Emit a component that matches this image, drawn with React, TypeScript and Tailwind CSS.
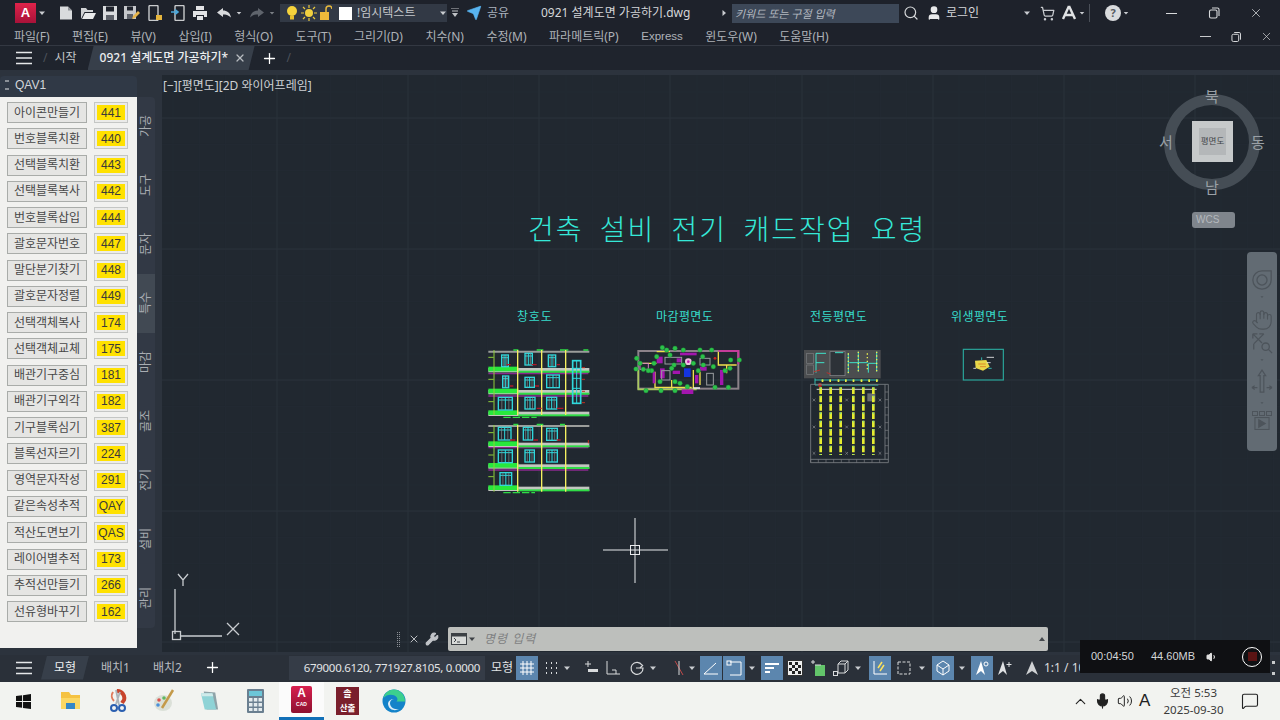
import { Hand, Mic, MessageSquare, Search, ShoppingCart, Volume1, Volume2, Wrench, X, Plus, ChevronUp, Send, User } from "lucide-react"
import { ReactNode } from "react"

const tools: [string, string][] = [
    ["아이콘만들기", "441"],
    ["번호블록치환", "440"],
    ["선택블록치환", "443"],
    ["선택블록복사", "442"],
    ["번호블록삽입", "444"],
    ["괄호문자번호", "447"],
    ["말단분기찾기", "448"],
    ["괄호문자정렬", "449"],
    ["선택객체복사", "174"],
    ["선택객체교체", "175"],
    ["배관기구중심", "181"],
    ["배관기구외각", "182"],
    ["기구블록심기", "387"],
    ["블록선자르기", "224"],
    ["영역문자작성", "291"],
    ["같은속성추적", "QAY"],
    ["적산도면보기", "QAS"],
    ["레이어별추적", "173"],
    ["추적선만들기", "266"],
    ["선유형바꾸기", "162"],
]

const sideTabs = ["가공", "도구", "문자", "특수", "마감", "골조", "전기", "설비", "관리"]

const menus = ["파일(F)", "편집(E)", "뷰(V)", "삽입(I)", "형식(O)", "도구(T)", "그리기(D)", "치수(N)", "수정(M)", "파라메트릭(P)", "Express", "윈도우(W)", "도움말(H)"]

function Caret({ className = "", color = "#c9ccd0" }: { className?: string; color?: string }) {
    return (
        <svg viewBox="0 0 8 8" className={`w-2 h-2 shrink-0 ${className}`}>
            <polygon points="1,2.5 7,2.5 4,6" fill={color} />
        </svg>
    )
}

function Burger({ className = "" }: { className?: string }) {
    return (
        <svg viewBox="0 0 16 14" className={`w-4 h-[14px] shrink-0 ${className}`}>
            <path d="M0 1.5h16M0 7h16M0 12.5h16" stroke="#e6e8ea" strokeWidth="1.6" />
        </svg>
    )
}

function Restore({ className = "" }: { className?: string }) {
    return (
        <svg viewBox="0 0 12 12" className={`w-3 h-3 shrink-0 ${className}`} fill="none" stroke="#d8dadc" strokeWidth="1.1">
            <rect x="1.5" y="3" width="7.5" height="8" rx="1.5" />
            <path d="M4 1h5.5A1.5 1.5 0 0 1 11 2.5V9" />
        </svg>
    )
}

function Ico({ children, className = "" }: { children: ReactNode; className?: string }) {
    return (
        <svg viewBox="0 0 16 16" className={`w-4 h-4 shrink-0 ${className}`} fill="none">
            {children}
        </svg>
    )
}

function TitleBar() {
    return (
        <div className="flex items-center h-[26px] bg-[#1e222b] text-[#d4d6d9] text-[12px]">
            <div className="ml-[15px] w-[21px] h-[20px] bg-gradient-to-b from-[#e0234a] to-[#a81239] flex items-center justify-center text-white text-[13px] font-bold [font-family:'Liberation_Sans',sans-serif] shrink-0">A</div>
            <Caret className="ml-[2px]" />
            <Ico className="ml-[12px]"><path d="M2 1.5h8l4 4v9H2z" fill="#d9dbdd" /><path d="M10 1.5v4h4" fill="#8f9398" /></Ico>
            <Ico className="ml-[6px]"><path d="M1 3h5l1.5 2H13v2H4.5L1 14z" fill="#d0d2d4" /><path d="M5 8h11l-3 6H2z" fill="#e9eaeb" /></Ico>
            <Ico className="ml-[6px]"><path d="M1 1h14v14H1z" fill="#d9dbdd" /><path d="M4 1.5h8v5H4z" fill="#1e222b" /><path d="M4 10h8v5H4z" fill="#5c6068" /></Ico>
            <Ico className="ml-[6px]"><path d="M0 1h12v13H0z" fill="#c5c7ca" /><path d="M3 1.5h6v4H3z" fill="#1e222b" /><path d="M3 9h6v5H3z" fill="#5c6068" /><path d="M8 14l1-3 5-5 2 2-5 5z" fill="#e9b64a" /></Ico>
            <Ico className="ml-[7px]"><rect x="2" y="0.5" width="9" height="15" rx="1" stroke="#c8cacc" strokeWidth="1.4" /><path d="M9 10h6v5H9z" fill="#e5b53d" /></Ico>
            <Ico className="ml-[7px]"><rect x="5" y="0.5" width="9" height="15" rx="1" stroke="#c8cacc" strokeWidth="1.4" /><path d="M1 7h6M5 4.5L8 7l-3 2.5" stroke="#4aa8dc" strokeWidth="1.6" /></Ico>
            <Ico className="ml-[6px]"><path d="M4 1h8v4H4z" fill="#e2e3e5" /><path d="M1 6h14v6h-3v-2H4v2H1z" fill="#e2e3e5" /><path d="M5 11h6v4H5z" fill="#e2e3e5" /></Ico>
            <Ico className="ml-[8px]"><path d="M7 3L1 7.5 7 12V9.5c3 0 5 .5 8 3-1-5-4-7-8-7z" fill="#d8dadc" /></Ico>
            <Caret className="ml-[3px] scale-75" />
            <Ico className="ml-[6px]"><path d="M9 3l6 4.5L9 12V9.5c-3 0-5 .5-8 3 1-5 4-7 8-7z" fill="#5f646c" /></Ico>
            <Caret className="ml-[3px] scale-75" color="#7b7f85" />
            <div className="ml-[4px] flex items-center w-[167px] h-[18px] bg-[#323945]">
                <svg viewBox="0 0 12 16" className="ml-[6px] w-3 h-4 shrink-0"><circle cx="6" cy="6" r="5" fill="#f6d33c" /><rect x="4" y="10.5" width="4" height="4" fill="#e8c02c" /></svg>
                <svg viewBox="0 0 16 16" className="ml-[3px] w-4 h-4 shrink-0"><circle cx="8" cy="8" r="4" fill="#f2d13f" /><path d="M8 0v3M8 13v3M0 8h3M13 8h3M2 2l2 2M12 12l2 2M14 2l-2 2M2 14l2-2" stroke="#e9c83c" strokeWidth="1.2" /></svg>
                <svg viewBox="0 0 12 16" className="ml-[3px] w-3 h-4 shrink-0"><path d="M6 8V4a3 3 0 0 1 6 0" stroke="#e7b93e" strokeWidth="1.5" fill="none" /><rect y="7" width="9" height="8" fill="#eeb93a" /></svg>
                <div className="ml-[7px] w-[13px] h-[13px] bg-white shrink-0" />
                <span className="ml-[5px] w-[85px] text-[12px] text-[#c5c8cc]">!임시텍스트</span>
                <Caret />
            </div>
            <svg viewBox="0 0 8 10" className="ml-[4px] w-2 h-[10px] shrink-0"><path d="M0 0h8M1 3h6" stroke="#bfc2c6" /><polygon points="1,5 7,5 4,9" fill="#bfc2c6" /></svg>
            <Send className="ml-[7px] w-4 h-4 shrink-0 text-[#58b4f0]" fill="#58b4f0" strokeWidth={1} />
            <span className="ml-[5px] w-[38px] text-[12px] text-[#aab3be]">공유</span>
            <span className="ml-[16px] w-[167px] text-[12px] whitespace-nowrap">0921 설계도면 가공하기.dwg</span>
            <Caret className="ml-[12px] -rotate-90" />
            <div className="ml-[4px] w-[167px] h-[19px] bg-[#3d4858] pl-[3px] text-[11px] italic text-[#b4b9c0] leading-[19px]">키워드 또는 구절 입력</div>
            <Search className="ml-[4px] w-4 h-4 shrink-0 text-[#d6d8da]" strokeWidth={1.8} />
            <User className="ml-[7px] w-4 h-4 shrink-0 text-[#e8e9ea]" fill="#e8e9ea" />
            <span className="ml-[4px] w-[77px] text-[12px]">로그인</span>
            <Caret />
            <ShoppingCart className="ml-[9px] w-[15px] h-[15px] shrink-0 text-[#c9ccd0]" />
            <svg viewBox="0 0 16 16" className="ml-[6px] w-4 h-4 shrink-0"><path d="M8 1L2 14M8 1l6 13M4 10h8" stroke="#e0e2e4" strokeWidth="2.4" fill="none" /></svg>
            <Caret className="ml-[1px] scale-75" />
            <div className="ml-[3px] w-px h-[18px] bg-[#4a4f58]" />
            <div className="ml-[15px] w-4 h-4 rounded-full bg-[#d9dbdd] text-[#555a60] text-[11px] font-bold flex items-center justify-center shrink-0">?</div>
            <Caret className="ml-[1px] scale-75" />
            <div className="ml-[36px] w-[11px] h-px bg-[#d8dadc]" />
            <Restore className="ml-[31px]" />
            <X className="ml-[29px] w-[14px] h-[14px] text-[#d8dadc]" strokeWidth={1.3} />
        </div>
    )
}

function MenuBar() {
    return (
        <div className="flex items-center h-[20px] bg-[#1e222b] border-b border-[#333842] pl-[14px] pt-[2px] text-[12px] text-[#aeb2b8]">
            <div className="flex gap-[22.5px] flex-1 whitespace-nowrap">
                {menus.map((m) => (
                    <span key={m} className={m === "Express" ? "[font-family:'Liberation_Sans',sans-serif] text-[11.5px]" : ""}>{m}</span>
                ))}
            </div>
            <div className="w-[11px] h-px bg-[#c8cacc]" />
            <Restore className="ml-[19px] scale-90" />
            <X className="ml-[18px] mr-[7px] w-[13px] h-[13px] text-[#d0d2d4]" strokeWidth={1.3} />
        </div>
    )
}

function TabBar() {
    return (
        <div className="flex items-center h-[24px] bg-[#1f242d] text-[12px] text-[#c3c6ca]">
            <Burger className="ml-[16px]" />
            <span className="ml-[11px] text-[#4c525b]">/</span>
            <span className="ml-[7px]">시작</span>
            <div className="ml-[11px] w-[167px] h-[24px] bg-[#373f4a] [clip-path:polygon(6px_0,100%_0,calc(100%-6px)_100%,0_100%)] flex items-center pl-[12px] text-[#eceef0] font-medium whitespace-nowrap">
                0921 설계도면 가공하기*
                <X className="ml-[6px] w-3 h-3 text-[#b8bcc1]" strokeWidth={2.5} />
            </div>
            <Plus className="ml-[6px] w-[17px] h-[17px] text-white" strokeWidth={1.8} />
            <span className="ml-[9px] text-[#4c525b]">/</span>
        </div>
    )
}

function ToolPalette() {
    return (
        <div className="w-[162px] shrink-0 flex flex-col pt-px">
            <div className="w-[137px] h-[21px] bg-[#303946] rounded-t flex items-center pb-[4px] text-[12px] text-[#d3d6da] shrink-0">
                <span className="ml-[5px] w-[4px] h-[10px] border-y-2 border-dotted border-[#8a8f96]" />
                <span className="ml-[6px] [font-family:'Liberation_Sans',sans-serif]">QAV1</span>
            </div>
            <div className="flex flex-1 items-start">
                <div className="w-[137px] h-[551px] bg-[#f1f1ef] pl-[7px] pt-[5px] flex flex-col gap-[5.27px] shrink-0">
                    {tools.map(([name, code]) => (
                        <div key={name} className="flex items-center h-[21px]">
                            <div className="w-[80px] h-[21px] bg-[#e5e5e3] border border-[#a9aca9] flex items-center justify-center text-[12px] text-[#474747] whitespace-nowrap">{name}</div>
                            <div className="ml-[7px] w-[34px] h-[21px] bg-[#ebebe9] border border-[#c4c6c4] p-[2px]">
                                <div className="h-full bg-[#ffe100] flex items-center justify-center text-[12px] text-[#3a3a3a] [font-family:'Liberation_Sans',sans-serif]">{code}</div>
                            </div>
                        </div>
                    ))}
                </div>
                <div className="w-[18px] h-[531px] bg-[#323945] rounded-r">
                    {sideTabs.map((t) => (
                        <div key={t} className={`h-[59px] flex items-center justify-center ${t === "특수" ? "bg-[#414953]" : ""}`}>
                            <span className="[writing-mode:vertical-rl] [text-orientation:sideways] rotate-180 text-[12px] leading-[16px] text-[#a9adb2]">{t}</span>
                        </div>
                    ))}
                </div>
            </div>
        </div>
    )
}

const majorX = [115, 246, 377, 508, 640, 771, 902, 1033]
const majorY = [43, 174, 305, 436, 567]

function GridLines() {
    const minorX = Array.from({ length: 44 }, (_, i) => 11 + i * 26.2)
    const minorY = Array.from({ length: 23 }, (_, i) => 17 + i * 26.2)
    return (
        <svg className="absolute inset-0" width="1118" height="577">
            {minorX.map((x) => <line key={x} x1={x} x2={x} y1="0" y2="577" stroke="#232a33" />)}
            {minorY.map((y) => <line key={y} y1={y} y2={y} x1="0" x2="1118" stroke="#232a33" />)}
            {majorX.map((x) => <line key={x} x1={x} x2={x} y1="0" y2="577" stroke="#2a323b" />)}
            {majorY.map((y) => <line key={y} y1={y} y2={y} x1="0" x2="1118" stroke="#2a323b" />)}
        </svg>
    )
}

const winGroups = [
    [65, 165, 20, 35], [135, 160, 22, 35], [205, 165, 22, 35],
    [68, 228, 18, 35], [135, 232, 28, 30], [200, 225, 38, 38],
    [55, 292, 42, 38], [135, 292, 30, 35], [200, 292, 30, 35],
    [55, 382, 38, 38], [130, 382, 28, 38], [200, 385, 32, 36],
    [55, 450, 42, 38], [135, 450, 28, 36], [200, 450, 32, 36],
    [60, 518, 35, 38],
]

const plasterDots = [
    [470, 175], [468, 207], [490, 208], [515, 212], [522, 190], [547, 143], [585, 145], [660, 150], [695, 150],
    [570, 165], [582, 195], [610, 195], [640, 190], [668, 170], [752, 180], [778, 180], [735, 212], [498, 272],
    [543, 272], [585, 272], [622, 260], [705, 262], [745, 262], [540, 245], [585, 245], [505, 212], [655, 212],
    [560, 150], [610, 150], [575, 205], [600, 250], [670, 195], [700, 200], [480, 190], [530, 170], [750, 205],
]

function WindowsPlan() {
    const bands = [204, 270, 335, 428, 493, 560]
    return (
        <>
            <path d="M25 155h303M25 378h303" stroke="#9b9d9b" strokeWidth="6" />
            <path d="M100 150h15M170 150h20M240 150h25M310 150h15M100 374h15M170 374h20M240 374h15" stroke="#2fdc46" strokeWidth="5" />
            <path d="M25 221h300M25 288h300M25 443h300M25 510h300" stroke="#8a2a8e" strokeWidth="4" />
            {bands.map((y) => (
                <g key={y}>
                    <rect x="25" y={y} width="303" height="13" fill="#c2c6c0" />
                    <rect x="25" y={y - 4} width="90" height="14" fill="#28e83c" />
                    <rect x="115" y={y + 8} width="213" height="6" fill="#2fdc46" />
                </g>
            ))}
            <path d="M42 150v195M42 375v200" stroke="#8fce3a" strokeWidth="3" />
            <path d="M113 150v195M185 150v195M257 150v195M113 375v200M185 375v200M257 375v200" stroke="#f5f060" strokeWidth="4" />
            <path d="M25 172h16M25 238h16M25 305h16M25 398h16M25 465h16M25 530h16" stroke="#8fce3a" strokeWidth="3" />
            {winGroups.map(([x, y, w, h]) => (
                <g key={`${x}-${y}`} fill="none" stroke="#30d8dc" strokeWidth="4">
                    <rect x={x} y={y} width={w} height={h} />
                    <path d={`M${x + w / 2} ${y}v${h}M${x} ${y + 8}h${w}`} strokeWidth="3" />
                    <path d={`M${x + w / 4} ${y}v${h}M${x + (3 * w) / 4} ${y}v${h}`} stroke="#7f8f8f" strokeWidth="2" />
                </g>
            ))}
            <rect x="278" y="182" width="24" height="128" fill="none" stroke="#30d8dc" strokeWidth="5" />
            <path d="M278 205h24M278 235h24M278 265h24M290 182v128" stroke="#30d8dc" strokeWidth="3" />
            <path d="M70 352h100M70 578h95" stroke="#2fdc46" strokeWidth="4" strokeDasharray="22 6" />
            <path d="M306 203h9M306 238h9M306 274h9M306 308h9M325 420v10" stroke="#c23020" strokeWidth="3" />
            <path d="M80 194h12M155 194h15M230 194h10M90 258h10M165 258h12M230 325h20M170 325h15M90 420h16M160 420h14M230 420h12" stroke="#b01a28" strokeWidth="4" />
        </>
    )
}

function FinishPlan() {
    return (
        <>
            <rect x="475" y="153" width="300" height="113" fill="none" stroke="#8b8289" strokeWidth="6" />
            <path d="M715 153h60v40" stroke="#c33c9a" strokeWidth="6" fill="none" />
            <path d="M475 210v58h175" stroke="#a9c95c" strokeWidth="5" fill="none" />
            <path d="M475 190h55M525 215v50M640 210v55M575 240v25M715 155v40h55M740 195v25M525 262h110M530 155h40M660 215v40" stroke="#f0e04c" strokeWidth="4" fill="none" />
            <g fill="#a316ae">
                <rect x="530" y="170" width="18" height="20" />
                <rect x="540" y="205" width="14" height="30" />
                <rect x="518" y="215" width="8" height="35" />
                <rect x="660" y="200" width="20" height="12" />
                <rect x="720" y="210" width="10" height="45" />
                <rect x="605" y="268" width="35" height="14" />
                <rect x="600" y="158" width="50" height="8" />
                <rect x="578" y="212" width="22" height="10" />
                <rect x="590" y="175" width="14" height="12" />
                <rect x="645" y="225" width="10" height="25" />
            </g>
            <g fill="none" stroke="#9a9da0" strokeWidth="3">
                <rect x="555" y="172" width="50" height="20" />
                <rect x="545" y="212" width="25" height="28" />
                <rect x="680" y="220" width="20" height="35" />
                <rect x="660" y="175" width="30" height="20" />
                <rect x="480" y="190" width="25" height="18" stroke="#d080c0" />
            </g>
            <circle cx="625" cy="185" r="10" fill="#f0c0e0" />
            <circle cx="625" cy="185" r="4" fill="#c01fb0" />
            <rect x="612" y="205" width="20" height="26" fill="#1434e0" />
            <rect x="640" y="262" width="20" height="4" fill="#ffffff" />
            <circle cx="705" cy="175" r="4" fill="#d02020" />
            {plasterDots.map(([x, y]) => <circle key={`${x}-${y}`} cx={x} cy={y} r="7" fill="#2cc24a" stroke="#1a7a30" />)}
        </>
    )
}

function LightPlan() {
    const rows = [92, 122, 152, 190, 220, 250]
    const dots = [243, 240]
    return (
        <>
            <rect x="42" y="150" width="230" height="85" fill="#4b4d4f" />
            <rect x="120" y="155" width="45" height="72" fill="#2d3238" stroke="#8b8e90" strokeWidth="2" />
            <rect x="50" y="160" width="20" height="30" fill="none" stroke="#7b7e80" strokeWidth="2" />
            <rect x="50" y="195" width="20" height="28" fill="none" stroke="#7b7e80" strokeWidth="2" />
            <path d="M78 160v58M78 160h30M78 188h25M135 158h25M175 160v60M205 155v60M178 188h55M260 155v60M235 190h25M235 190v28" stroke="#3ee0c8" strokeWidth="3" fill="none" />
            <path d="M175 160v60M205 155v60M232 160v55M260 155v60" stroke="#eaf050" strokeWidth="4" strokeDasharray="4 7" fill="none" />
            <path d="M75 235v20h190M75 240h190" stroke="#38d8c8" strokeWidth="2.5" fill="none" />
            {[95, 118, 143, 165, 188, 212, 235, 258].map((x) => dots.map((y) => <rect key={`${x}-${y}`} x={x} y={y - 2} width="5" height="5" fill="#e8ee44" />))}
            <path d="M72 215l18-5M110 218l12 4" stroke="#b8302c" strokeWidth="3" />
            <circle cx="90" cy="255" r="6" fill="#b92c2a" />
            <path d="M62 253h233v235H62zM62 478h233M285 253v225" fill="none" stroke="#7b7f84" strokeWidth="2.5" />
            <path d="M62 488v-10M85 488v-10M108 488v-10M131 488v-10M154 488v-10M177 488v-10M200 488v-10M223 488v-10M246 488v-10M269 488v-10M285 276h10M285 299h10M285 322h10M285 345h10M285 368h10M285 391h10M285 414h10M285 437h10M285 460h10" stroke="#7b7f84" strokeWidth="2" />
            <path d="M80 268h180" stroke="#eef2f4" strokeWidth="2.5" />
            <rect x="232" y="280" width="24" height="24" fill="#6a6d70" />
            {[300, 381, 460].map((y) => [72, 170, 270].map((x) => <path key={`${x}-${y}`} d={`M${x - 4} ${y - 4}l8 8m0 -8l-8 8`} stroke="#8a8d90" strokeWidth="2" />))}
            {rows.map((x) => (
                <g key={x}>
                    <path d={`M${x} 262v203`} stroke="#e6ec30" strokeWidth="8" strokeDasharray="20 5" />
                    <path d={`M${x} 262v203`} stroke="#35d8c8" strokeWidth="2" strokeDasharray="5 20" />
                </g>
            ))}
        </>
    )
}

function SanitaryPlan() {
    return (
        <>
            <rect x="520" y="148" width="120" height="92" fill="none" stroke="#2aa79b" strokeWidth="3.5" />
            <path d="M555 182l34-2 10 20-20 12-22-8z" fill="#e8d84a" />
            <path d="M565 192h22M570 200h18" stroke="#e08a28" strokeWidth="3" />
            <path d="M590 172h22M590 188h12M550 205h8" stroke="#f2f2f2" strokeWidth="2.5" />
            <path d="M575 180v-8M595 205h10" stroke="#38cfc4" strokeWidth="2.5" />
        </>
    )
}

function ViewCube() {
    return (
        <>
            <div className="absolute left-[1002px] top-[19px] w-[96px] h-[96px] rounded-full border-[11px] border-[#454d55]" />
            <div className="absolute left-[1030px] top-[46px] w-[41px] h-[41px] bg-[#c6c9ca] flex items-center justify-center">
                <div className="w-[27px] h-[27px] bg-[#b4b7b9] flex items-center justify-center text-[8.5px] text-[#3f4347] whitespace-nowrap">평면도</div>
            </div>
            <span className="absolute left-[1043px] top-[11px] text-[15px] leading-[20px] text-[#9aa0a6]">북</span>
            <span className="absolute left-[1043px] top-[102px] text-[15px] leading-[20px] text-[#9aa0a6]">남</span>
            <span className="absolute left-[997px] top-[57px] text-[15px] leading-[20px] text-[#9aa0a6]">서</span>
            <span className="absolute left-[1089px] top-[57px] text-[15px] leading-[20px] text-[#9aa0a6]">동</span>
            <div className="absolute left-[1030px] top-[137px] w-[43px] h-[16px] rounded-[3px] bg-[#7f858c] pl-[4px] text-[10px] leading-[16px] text-[#b4b8bc] [font-family:'Liberation_Sans',sans-serif]">WCS</div>
        </>
    )
}

function NavBar() {
    return (
        <div className="absolute left-[1085px] top-[177px] w-[30px] h-[199px] bg-[#626b73] rounded-[4px] flex flex-col items-center pt-[17px] text-[#4d545b]">
            <svg viewBox="0 0 24 24" className="w-[22px] h-[22px]" fill="none" stroke="currentColor" strokeWidth="1.4">
                <path d="M12 2a10 10 0 1 0 10 10V2z" />
                <circle cx="12" cy="12" r="5.5" />
            </svg>
            <Caret className="mt-[2px] scale-50" color="#4d545b" />
            <Hand className="mt-[8px] w-[22px] h-[22px]" strokeWidth={1.2} />
            <svg viewBox="0 0 24 24" className="mt-[1px] w-[22px] h-[22px]" fill="none" stroke="currentColor" strokeWidth="1.4">
                <path d="M2 2l10 10M2 2h5M2 2v5M14 2L3 13M14 2h-5M3 13v6" />
                <circle cx="16" cy="16" r="4" />
                <path d="M19 19l4 4" />
            </svg>
            <Caret className="mt-[2px] scale-50" color="#4d545b" />
            <svg viewBox="0 0 24 30" className="mt-[5px] w-[22px] h-[28px]" fill="none" stroke="currentColor" strokeWidth="1.3">
                <path d="M12 1l4 6h-2v18h-4V7H8z" />
                <path d="M1 20h6M23 20h-6M1 20l3-2M1 20l3 2M23 20l-3-2M23 20l-3 2" />
            </svg>
            <Caret className="mt-[2px] scale-50" color="#4d545b" />
            <div className="mt-[4px] flex gap-px">
                <div className="w-[6px] h-[5px] border border-[#4d545b]" />
                <div className="w-[6px] h-[5px] border border-[#4d545b]" />
                <div className="w-[6px] h-[5px] border border-[#4d545b]" />
            </div>
            <svg viewBox="0 0 14 12" className="mt-px w-[16px] h-[13px]" fill="none" stroke="currentColor">
                <rect x="0.5" y="0.5" width="13" height="11" />
                <polygon points="4,2.5 10,6 4,9.5" fill="currentColor" />
            </svg>
        </div>
    )
}

function Canvas() {
    return (
        <div className="relative flex-1 h-[577px] bg-[#212830] overflow-hidden">
            <GridLines />
            <span className="absolute left-[1px] top-[2px] text-[12px] leading-[17px] text-[#cdd1d5] whitespace-nowrap">[−][평면도][2D 와이어프레임]</span>
            <span className="absolute left-[366px] top-[134px] text-[28px] leading-[40px] font-light tracking-[2px] [word-spacing:7px] text-[#35e8d8] whitespace-nowrap">건축 설비 전기 캐드작업 요령</span>
            <span className="absolute left-[355px] top-[233px] text-[12px] leading-[18px] tracking-[0.8px] text-[#38dccb]">창호도</span>
            <span className="absolute left-[494px] top-[233px] text-[12px] leading-[18px] tracking-[0.4px] text-[#38dccb]">마감평면도</span>
            <span className="absolute left-[648px] top-[233px] text-[12px] leading-[18px] tracking-[0.4px] text-[#38dccb]">전등평면도</span>
            <span className="absolute left-[789px] top-[233px] text-[12px] leading-[18px] tracking-[0.4px] text-[#38dccb]">위생평면도</span>
            <svg viewBox="0 0 840 600" className="absolute left-[318px] top-[225px] w-[280px] h-[200px]">
                <WindowsPlan />
                <FinishPlan />
            </svg>
            <svg viewBox="0 0 720 510" className="absolute left-[628px] top-[225px] w-[240px] h-[170px]">
                <LightPlan />
                <SanitaryPlan />
            </svg>
            {/* crosshair */}
            <svg className="absolute left-[440px] top-[442px]" width="66" height="66" fill="none" stroke="#e8eaec">
                <path d="M33 1v65M1 33h65" />
                <rect x="28.5" y="28.5" width="9" height="9" />
            </svg>
            {/* ucs icon */}
            <svg className="absolute left-[8px] top-[496px]" width="76" height="74" fill="none" stroke="#c8ccd0" strokeWidth="1.3">
                <path d="M5 18v45M10 65h42" />
                <rect x="2.5" y="60.500" width="8" height="8" />
                <path d="M8 3l5 6 5-6M13 9v6M57 52l12 12M69 52L57 64" />
            </svg>
            <ViewCube />
            <NavBar />
            <div className="absolute left-[235px] top-[552px] flex items-center h-[24px]">
                <span className="w-[3px] h-[15px] border-x border-dotted border-[#8c9096]" />
                <X className="ml-[8px] w-3 h-3 text-[#b9bcc0]" strokeWidth={2} />
                <Wrench className="ml-[5px] w-[14px] h-[14px] text-[#c2c5c9]" fill="#c2c5c9" />
            </div>
            <div className="absolute left-[286px] top-[552px] w-[600px] h-[24px] bg-[#bdbfbc] rounded-[2px] flex items-center">
                <svg viewBox="0 0 16 12" className="ml-[3px] w-4 h-3 shrink-0">
                    <rect x="0.5" y="0.5" width="15" height="11" fill="#d8dad8" stroke="#3d4145" />
                    <rect x="1" y="1" width="14" height="2.5" fill="#3d4145" />
                    <path d="M3 5l2 2-2 2M6 9h3" stroke="#3d4145" fill="none" />
                </svg>
                <Caret className="ml-[1px]" color="#3d4145" />
                <span className="ml-[8px] flex-1 text-[12px] italic tracking-[1px] text-[#7f8182]">명령 입력</span>
                <svg viewBox="0 0 8 8" className="mr-[2px] w-2 h-2"><polygon points="1,6 7,6 4,2" fill="#45494d" /></svg>
            </div>
        </div>
    )
}

function Blue({ children, className = "" }: { children: ReactNode; className?: string }) {
    return <div className={`w-[22px] h-[24px] bg-[#5c86ae] flex items-center justify-center shrink-0 ${className}`}>{children}</div>
}

function StatusBar() {
    return (
        <div className="flex items-center h-[27px] pb-[2px] bg-[#2a3039] text-[12px] text-[#dadcdf] whitespace-nowrap">
            <Burger className="ml-[16px]" />
            <div className="ml-[9px] w-[48px] h-[24px] bg-[#373f4a] [clip-path:polygon(6px_0,100%_0,calc(100%-6px)_100%,0_100%)] flex items-center justify-center text-[#eceef0]">모형</div>
            <span className="ml-[12px] w-[28px] text-[#b9bcc1]">배치1</span>
            <span className="ml-[24px] w-[29px] text-[#b9bcc1]">배치2</span>
            <Plus className="ml-[22px] w-[17px] h-[17px] text-white" strokeWidth={1.8} />
            <div className="ml-[68px] w-[196px] h-[24px] bg-[#353c47] flex items-center justify-end pr-[5px] [font-family:'Noto_Sans',sans-serif] text-[11.5px] text-[#e2e4e6] tracking-[-0.3px]">679000.6120, 771927.8105, 0.0000</div>
            <span className="ml-[6px] w-[21px] text-[#e2e4e6]">모형</span>
            <Blue className="ml-[4px] w-[21px]">
                <svg viewBox="0 0 14 14" className="w-[14px] h-[14px]"><path d="M3 0v14M7 0v14M11 0v14M0 3h14M0 7h14M0 11h14" stroke="#fff" /></svg>
            </Blue>
            <svg viewBox="0 0 14 14" className="ml-[6px] w-[14px] h-[14px] shrink-0"><path d="M2 2h1M7 2h1M12 2h1M2 7h1M7 7h1M12 7h1M2 12h1M7 12h1M12 12h1" stroke="#d8dadc" strokeWidth="2" /></svg>
            <Caret className="ml-[5px]" />
            <svg viewBox="0 0 16 16" className="ml-[11px] w-4 h-4 shrink-0"><path d="M3 4h6M6 1v6" stroke="#d8dadc" /><rect x="6" y="9" width="10" height="3" fill="#d8dadc" /></svg>
            <svg viewBox="0 0 16 16" className="ml-[7px] w-4 h-4 shrink-0" fill="none"><path d="M2 1v13h13" stroke="#d8dadc" /><path d="M7 10h4v4" stroke="#d8dadc" /></svg>
            <svg viewBox="0 0 16 16" className="ml-[7px] w-4 h-4 shrink-0" fill="none" stroke="#d8dadc" strokeWidth="1.2"><path d="M14 5a6 6 0 1 0 1 3h-7" /><path d="M12 8l3-3" /></svg>
            <Caret className="ml-[5px]" />
            <svg viewBox="0 0 16 16" className="ml-[14px] w-4 h-4 shrink-0" fill="none"><path d="M4 1l8 14" stroke="#c04a4a" /><path d="M8 1v14" stroke="#d8dadc" /></svg>
            <Caret className="ml-[1px]" />
            <Blue className="ml-[4px]">
                <svg viewBox="0 0 16 16" className="w-4 h-4" fill="none" stroke="#fff"><path d="M1 14h14M1 14L13 3" /></svg>
            </Blue>
            <Blue className="ml-px">
                <svg viewBox="0 0 16 16" className="w-4 h-4" fill="none" stroke="#fff"><path d="M4 2h11v13H4" /><rect x="1" y="1" width="4" height="4" /></svg>
            </Blue>
            <Caret className="ml-[3px]" />
            <Blue className="ml-[5px]">
                <svg viewBox="0 0 16 16" className="w-4 h-4"><path d="M1 3h14v2H1zM1 7h9v2H1zM1 11h5v2H1z" fill="#fff" /></svg>
            </Blue>
            <svg viewBox="0 0 16 16" className="ml-[4px] w-4 h-4 shrink-0"><rect x="0.5" y="0.5" width="15" height="15" fill="#eee" stroke="#333" /><path d="M2 2h3v3H2zM8 2h3v3H8zM5 5h3v3H5zM11 5h3v3h-3zM2 8h3v3H2zM8 8h3v3H8zM5 11h3v3H5zM11 11h3v3h-3z" fill="#222" /></svg>
            <svg viewBox="0 0 16 16" className="ml-[7px] w-4 h-4 shrink-0"><rect x="5" y="5" width="10" height="11" fill="#62c46a" /><path d="M1 2h4M3 0v4M5 5h6" stroke="#d8dadc" /></svg>
            <svg viewBox="0 0 16 16" className="ml-[7px] w-4 h-4 shrink-0" fill="none" stroke="#d8dadc"><path d="M5 4l3-3h7v9l-3 3H5zM5 4h7v9M12 4l3-3" /><rect x="0.5" y="11.5" width="4" height="4" /></svg>
            <Caret className="ml-[5px]" />
            <Blue className="ml-[7px]">
                <svg viewBox="0 0 16 16" className="w-4 h-4" fill="none"><path d="M2 1v13h13" stroke="#fff" /><path d="M6 8l4-6M8 11l4-6" stroke="#ffe45c" strokeWidth="1.5" /></svg>
            </Blue>
            <svg viewBox="0 0 16 16" className="ml-[5px] w-4 h-4 shrink-0" fill="none" stroke="#d8dadc" strokeDasharray="3 1.5"><rect x="2" y="2" width="12" height="12" /></svg>
            <Caret className="ml-[6px]" />
            <Blue className="ml-[6px] w-[21px]">
                <svg viewBox="0 0 16 16" className="w-4 h-4" fill="none" stroke="#fff"><path d="M8 1l6 4v6l-6 4-6-4V5zM2 5l6 4 6-4M8 9v6" /></svg>
            </Blue>
            <Caret className="ml-[4px]" />
            <Blue className="ml-[5px] w-[21px]">
                <svg viewBox="0 0 16 16" className="w-4 h-4"><path d="M7 1L2 15l5-4 4 4-2-7z" fill="#fff" /><circle cx="12" cy="4" r="2" fill="none" stroke="#fff" /></svg>
            </Blue>
            <svg viewBox="0 0 16 16" className="ml-[3px] w-4 h-4 shrink-0"><path d="M7 1L2 15l5-4 4 4-2-7z" fill="#e0e2e4" /><path d="M13 2v5M10.5 4.5h5" stroke="#e0e2e4" /></svg>
            <svg viewBox="0 0 16 16" className="ml-[12px] w-4 h-4 shrink-0"><path d="M8 1L2 15l6-4 6 4z" fill="#d0d2d4" /></svg>
            <span className="ml-[4px]">1:1 / 100%</span>
            <span className="ml-auto mr-[5px] w-[3px] h-[14px] border-y-[3px] border-dotted border-[#c8cacc]" />
        </div>
    )
}

function Recorder() {
    return (
        <div className="absolute left-[1080px] top-[640px] w-[190px] h-[33px] bg-[#0f1013] flex items-center text-[11px] text-[#d4d6d8] [font-family:'Liberation_Sans',sans-serif]">
            <span className="ml-[11px] w-[45px]">00:04:50</span>
            <span className="ml-[15px] w-[46px]">44.60MB</span>
            <Volume1 className="ml-[9px] w-[12px] h-[12px] text-[#e0e0e0]" fill="#e0e0e0" />
            <div className="ml-[24px] w-[20px] h-[20px] rounded-full border-[1.5px] border-white flex items-center justify-center">
                <div className="w-[9px] h-[9px] bg-[#5a1414]" />
            </div>
        </div>
    )
}

function Taskbar() {
    return (
        <div className="flex items-center h-[38px] bg-[#f2f3f0] text-[#222]">
            <svg viewBox="0 0 16 16" className="ml-[16px] w-[15px] h-[15px] shrink-0"><path d="M0 2.2L6.5 1.3v6.2H0zM7.5 1.2L16 0v7.5H7.5zM0 8.5h6.5v6.2L0 13.8zM7.5 8.5H16V16l-8.5-1.2z" fill="#111" /></svg>
            <svg viewBox="0 0 21 20" className="ml-[29px] w-[21px] h-[20px] shrink-0">
                <path d="M1 1h8l2 3h9v14H1z" fill="#f5c242" />
                <rect x="1" y="7" width="19" height="11" fill="#fbd764" />
                <rect x="6" y="12" width="9" height="6" fill="#3587c7" />
            </svg>
            <svg viewBox="0 0 20 24" className="ml-[27px] w-[20px] h-[24px] shrink-0" fill="none">
                <path d="M9 2a7 7 0 0 1 7 9l-2 3" stroke="#c8442c" strokeWidth="4" />
                <path d="M5 3a7 7 0 0 0 1 9" stroke="#e07a5c" strokeWidth="2" />
                <path d="M8 1l3 15M12 3L8 15" stroke="#aeb3b8" strokeWidth="1.8" />
                <circle cx="6" cy="19" r="3" stroke="#2b5fb0" strokeWidth="2" />
                <circle cx="14" cy="19" r="3" stroke="#2b5fb0" strokeWidth="2" />
            </svg>
            <svg viewBox="0 0 22 24" className="ml-[25px] w-[22px] h-[24px] shrink-0">
                <ellipse cx="10" cy="14" rx="9" ry="8" fill="#dbe0d8" />
                <circle cx="6" cy="11" r="1.8" fill="#d9534f" />
                <circle cx="11" cy="9" r="1.8" fill="#5fb760" />
                <circle cx="5" cy="16" r="1.8" fill="#4a90d9" />
                <path d="M20 1L9 19" stroke="#c49a4a" strokeWidth="2.5" />
            </svg>
            <svg viewBox="0 0 22 22" className="ml-[24px] w-[21px] h-[22px] shrink-0">
                <path d="M5 1l12 1 3 18H8z" fill="#8fa3a8" />
                <path d="M2 3l12 0 4 17H6z" fill="#8fd3d6" />
                <path d="M2 3l12 0 1 3H3z" fill="#cfeaea" />
            </svg>
            <svg viewBox="0 0 17 24" className="ml-[27px] w-[17px] h-[24px] shrink-0">
                <rect width="17" height="24" rx="1" fill="#6a7f90" />
                <rect x="2" y="2" width="13" height="5" fill="#6cc6d8" />
                <path d="M2 9h3.5v3.5H2zM6.8 9h3.5v3.5H6.8zM11.5 9H15v3.5h-3.5zM2 14h3.5v3.5H2zM6.8 14h3.5v3.5H6.8zM11.5 14H15v3.5h-3.5zM2 19h3.5v3H2zM6.8 19h3.5v3H6.8zM11.5 19H15v3h-3.5z" fill="#e4ebee" />
            </svg>
            <div className="ml-[15px] w-[45px] h-[38px] bg-[#fbfbfb] border-b-[3px] border-[#1270b8] flex items-center justify-center">
                <div className="w-[21px] h-[27px] rounded-[2px] bg-gradient-to-b from-[#d8204f] to-[#8e1030] flex flex-col items-center pt-px text-white [font-family:'Liberation_Sans',sans-serif] leading-none">
                    <span className="text-[12px] font-bold">A</span>
                    <span className="mt-[3px] text-[5px] font-bold">CAD</span>
                </div>
            </div>
            <div className="ml-[12px] w-[23px] h-[28px] bg-[#7a1f2c] flex flex-col items-center text-white font-bold">
                <span className="text-[9px] leading-[14px]">솔</span>
                <span className="text-[8.5px] leading-[14px] whitespace-nowrap">산출</span>
            </div>
            <svg viewBox="0 0 24 24" className="ml-[23px] w-[24px] h-[24px] shrink-0">
                <circle cx="12" cy="12" r="11.5" fill="#1483c9" />
                <path d="M23 12C23 5 17 .5 12 .5 7 .5 2.500 4 1.500 9c3-4 10-4.500 13-1 1.500 1.800 1 3.500 0 4.500h8.500z" fill="#3ccf8e" />
                <path d="M8 14c0 4 4 7 9 6-3 2-10 2-11-5 0-3 3-5 6-5-2 0-4 2-4 4z" fill="#fff" opacity="0.85" />
            </svg>
            <ChevronUp className="ml-auto w-[17px] h-[17px] shrink-0" strokeWidth={1.6} />
            <Mic className="ml-[5px] w-[17px] h-[20px] shrink-0" fill="#222" strokeWidth={1.6} />
            <Volume2 className="ml-[6px] w-[16px] h-[16px] shrink-0" strokeWidth={1.5} />
            <span className="ml-[6px] w-[14px] text-[17px] [font-family:'Liberation_Sans',sans-serif]">A</span>
            <div className="ml-[9px] w-[63px] flex flex-col items-center text-[11.5px] leading-[17px] text-[#3a3a3a] whitespace-nowrap">
                <span>오전 5:53</span>
                <span>2025-09-30</span>
            </div>
            <MessageSquare className="ml-[16px] mr-[21px] w-[18px] h-[18px] shrink-0" strokeWidth={1.5} />
        </div>
    )
}

export default function App() {
    return (
        <div className="relative w-[1280px] h-[720px] overflow-hidden flex flex-col [font-family:'Noto_Sans','Noto_Sans_CJK_KR',sans-serif] bg-[#2a3039]">
            <TitleBar />
            <MenuBar />
            <TabBar />
            <div className="flex h-[585px] pt-[5px] bg-[#2c333d]">
                <ToolPalette />
                <Canvas />
            </div>
            <StatusBar />
            <Taskbar />
            <Recorder />
        </div>
    )
}
